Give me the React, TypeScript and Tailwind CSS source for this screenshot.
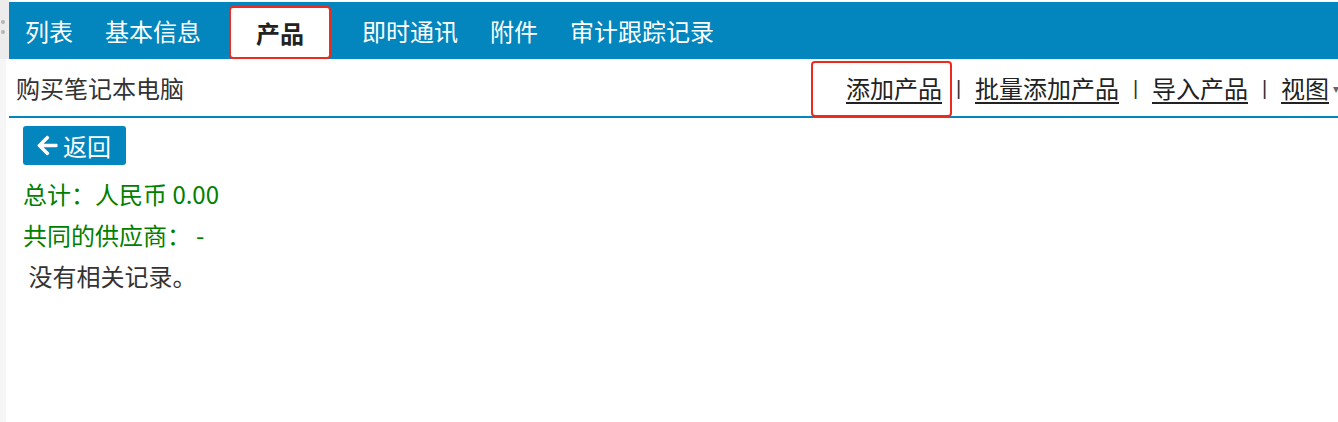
import { FaArrowLeft } from "react-icons/fa";

const tabs = ["列表", "基本信息", "产品", "即时通讯", "附件", "审计跟踪记录"];
const links = ["添加产品", "批量添加产品", "导入产品", "视图"];

const font = "font-['Microsoft_YaHei','Noto_Sans_CJK_SC',sans-serif]";

const App = () => {
  return (
    <div className={`flex w-[1338px] h-[422px] bg-white overflow-hidden ${font}`}>
      {/* left grip strip */}
      <div className="flex flex-col w-[9px] shrink-0">
        <div className="h-[59px] bg-[#ececec] flex flex-col items-center gap-[6px] pt-[20px] pr-[3px]">
          <span className="w-[4px] h-[4px] rounded-full bg-[#b5b5b5]" />
          <span className="w-[4px] h-[4px] rounded-full bg-[#b5b5b5]" />
        </div>
        <div className="flex-1 w-[6px] bg-[#f6f6f6]" />
      </div>

      <div className="flex-1 flex flex-col pt-[2px] min-w-0">
        {/* Tabs */}
        <div className="h-[57px] bg-[#0286bd] flex items-stretch text-[24px] leading-none text-white">
          {tabs.map((tab) =>
            tab === "产品" ? (
              <div
                key={tab}
                className="self-end h-[53px] ml-[12px] mr-[15px] px-[25px] flex items-center bg-white border-2 border-[#ee2a1e] rounded-[4px] text-[#222] font-bold"
              >
                {tab}
              </div>
            ) : (
              <div key={tab} className="px-4 flex items-center">
                {tab}
              </div>
            )
          )}
        </div>

        {/* Title row */}
        <div className="h-[59px] flex items-center border-b-2 border-[#0286bd] text-[#333] text-[24px] leading-none">
          <div className="pl-[7px]">购买笔记本电脑</div>
          <div className="ml-auto -mr-[1px] flex items-center self-stretch">
            {links.map((link, i) => (
              <div key={link} className="flex items-center self-stretch">
                {i > 0 && (
                  <span className="w-[33px] text-center text-[20px] font-['Liberation_Sans'] text-[#333]">|</span>
                )}
                <span className="relative self-stretch flex items-center">
                  <span className="underline underline-offset-[4px] decoration-[1.5px] text-[#222]">{link}</span>
                  {i === 0 && (
                    <span className="absolute -left-[35px] -right-[10px] top-[2px] -bottom-[1px] border-2 border-[#ee2a1e] rounded-[4px]" />
                  )}
                </span>
                {i === links.length - 1 && (
                  <span className="ml-[4px] text-[12px] text-[#666]">▾</span>
                )}
              </div>
            ))}
          </div>
        </div>

        {/* Content */}
        <div className="pl-[14px] pt-[8px] flex flex-col items-start text-[24px]">
          <button className="h-[39px] pl-[13px] pr-[15px] flex items-center gap-[4px] bg-[#0286bd] rounded-[3px] text-white leading-none">
            <FaArrowLeft size={23} />
            <span>返回</span>
          </button>
          <div className="mt-[8px] h-[41px] flex items-center text-[#008000]">总计：人民币 0.00</div>
          <div className="h-[41px] flex items-center text-[#008000]">
            共同的供应商：<span className="ml-[5px]">-</span>
          </div>
          <div className="h-[41px] flex items-center text-[#333]">&nbsp;没有相关记录。</div>
        </div>
      </div>
    </div>
  );
};

export default App;
